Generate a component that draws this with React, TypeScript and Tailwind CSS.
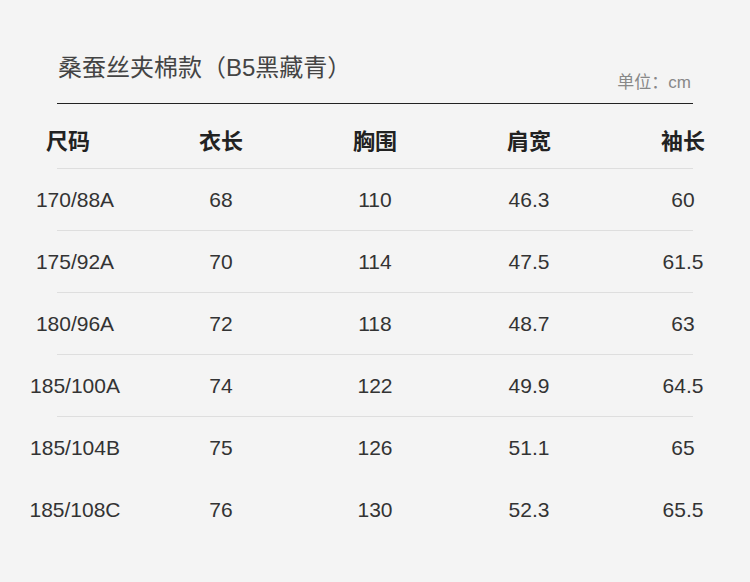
const headers = ["尺码", "衣长", "胸围", "肩宽", "袖长"];

const rows = [
  ["170/88A", "68", "110", "46.3", "60"],
  ["175/92A", "70", "114", "47.5", "61.5"],
  ["180/96A", "72", "118", "48.7", "63"],
  ["185/100A", "74", "122", "49.9", "64.5"],
  ["185/104B", "75", "126", "51.1", "65"],
  ["185/108C", "76", "130", "52.3", "65.5"],
];

export default function App() {
  return (
    <div className="w-[750px] h-[582px] overflow-hidden bg-[#f4f4f4] font-['Liberation_Sans','Noto_Sans_CJK_SC',sans-serif] text-[#333]">
      {/* Title */}
      <div className="mx-[57px] pt-[52px] pb-[10px] flex items-start justify-between border-b border-[#222]">
        <div className="text-[24px] leading-[32px] text-[#444] pl-px">
          桑蚕丝夹棉款（B5黑藏青）
        </div>
        <div className="mt-[21px] text-[17px] leading-[20px] text-[#888] mr-[2px]">单位：cm</div>
      </div>

      {/* Table */}
      <div className="grid grid-cols-[144px_154px_154px_154px_144px] pt-[10px] h-[64px] items-center">
        {headers.map((h, i) => (
          <div
            key={h}
            className={`text-center text-[22px] font-bold text-[#222] ${i === 0 ? "pr-[8px]" : ""} ${i === 4 ? "pl-[10px]" : ""}`}
          >
            {h}
          </div>
        ))}
      </div>
      <div className="mx-[57px] border-b border-[#dedede]" />
      {rows.map((r, ri) => (
        <div key={r[0]}>
          <div className="grid grid-cols-[144px_154px_154px_154px_144px] h-[61px] items-center text-[21px]">
            {r.map((c, i) => (
              <div key={i} className={`text-center ${i === 0 ? "pl-[6px]" : ""} ${i === 4 ? "pl-[10px]" : ""}`}>
                {c}
              </div>
            ))}
          </div>
          {ri < 4 && <div className="mx-[57px] border-b border-[#dedede]" />}
          {ri === 4 && <div className="h-px" />}
        </div>
      ))}
    </div>
  );
}
